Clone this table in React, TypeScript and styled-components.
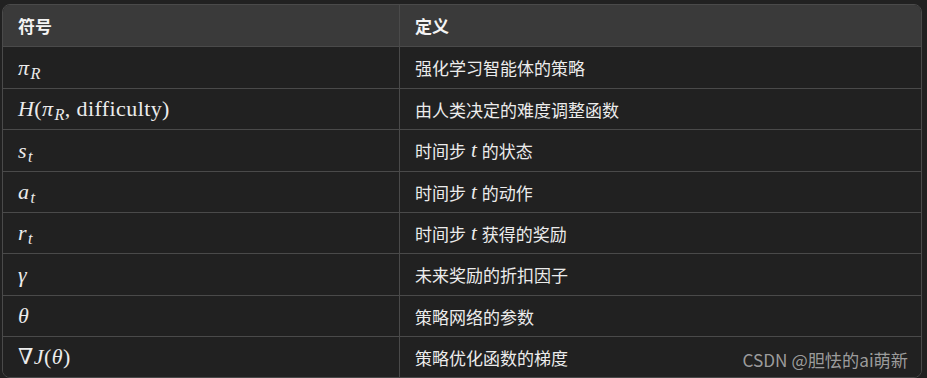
import React from "react";
import styled, { createGlobalStyle } from "styled-components";

const Global = createGlobalStyle`
  html, body { margin: 0; padding: 0; background: #212121; }
  body { font-family: "Noto Sans CJK SC", "Noto Sans", sans-serif; color: #ececec; }
`;

const Page = styled.div`
  position: relative;
  width: 927px;
  height: 378px;
  padding: 4px 5px 0 2px;
  box-sizing: border-box;
`;

const Table = styled.div`
  border: 1px solid #4a4a4a;
  border-radius: 8px;
  overflow: hidden;
  background: #212121;
`;

const Row = styled.div<{ $head?: boolean; $h: number }>`
  display: grid;
  grid-template-columns: 396px 1fr;
  height: ${(p) => p.$h}px;
  background: ${(p) => (p.$head ? "#3a3a3a" : "#212121")};
  & + & { border-top: 1px solid #4a4a4a; }
  box-sizing: border-box;
`;

const Cell = styled.div<{ $head?: boolean }>`
  display: flex;
  align-items: center;
  padding-left: 15px;
  font-size: 17px;
  font-weight: ${(p) => (p.$head ? 700 : 400)};
  color: ${(p) => (p.$head ? "#f4f4f4" : "#ececec")};
  white-space: nowrap;
  & + & { border-left: 1px solid #4a4a4a; padding-left: 15px; }
`;

const Math = styled.span`
  font-family: "Liberation Serif", "DejaVu Serif", serif;
  font-size: 22px;
  letter-spacing: 0.4px;
  color: #ececec;
  line-height: 1;
  white-space: nowrap;
`;

const I = styled.i`
  font-style: italic;
`;

const Sub = styled.sub`
  font-size: 0.74em;
  font-style: italic;
  vertical-align: -0.25em;
  line-height: 0;
  margin-left: 1px;
`;

const Up = styled.span`
  font-style: normal;
`;

const InlineT = styled.i`
  font-family: "Liberation Serif", "DejaVu Serif", serif;
  font-size: 21px;
  font-style: italic;
  margin: 0 5px 0 5px;
`;

const Watermark = styled.div`
  position: absolute;
  right: 19px;
  bottom: 6px;
  font-family: "Noto Sans CJK SC", "Noto Sans", sans-serif;
  font-size: 17.2px;
  color: rgba(190, 190, 190, 0.8);
  white-space: nowrap;
`;

type R = { sym: React.ReactNode; def: React.ReactNode; h: number };

const rows: R[] = [
  {
    sym: (
      <Math>
        <I>π</I>
        <Sub>R</Sub>
      </Math>
    ),
    def: "强化学习智能体的策略",
    h: 42,
  },
  {
    sym: (
      <Math>
        <I>H</I>
        <Up>(</Up>
        <I>π</I>
        <Sub>R</Sub>
        <Up>, difficulty)</Up>
      </Math>
    ),
    def: "由人类决定的难度调整函数",
    h: 41,
  },
  {
    sym: (
      <Math>
        <I>s</I>
        <Sub>t</Sub>
      </Math>
    ),
    def: (
      <>
        时间步<InlineT>t</InlineT>的状态
      </>
    ),
    h: 42,
  },
  {
    sym: (
      <Math>
        <I>a</I>
        <Sub>t</Sub>
      </Math>
    ),
    def: (
      <>
        时间步<InlineT>t</InlineT>的动作
      </>
    ),
    h: 41,
  },
  {
    sym: (
      <Math>
        <I>r</I>
        <Sub>t</Sub>
      </Math>
    ),
    def: (
      <>
        时间步<InlineT>t</InlineT>获得的奖励
      </>
    ),
    h: 41,
  },
  {
    sym: (
      <Math>
        <I>γ</I>
      </Math>
    ),
    def: "未来奖励的折扣因子",
    h: 42,
  },
  {
    sym: (
      <Math>
        <I>θ</I>
      </Math>
    ),
    def: "策略网络的参数",
    h: 41,
  },
  {
    sym: (
      <Math>
        <Up>∇</Up>
        <I>J</I>
        <Up>(</Up>
        <I>θ</I>
        <Up>)</Up>
      </Math>
    ),
    def: "策略优化函数的梯度",
    h: 41,
  },
];

export default function App() {
  return (
    <>
      <Global />
      <Page>
        <Table>
          <Row $head $h={41}>
            <Cell $head>符号</Cell>
            <Cell $head>定义</Cell>
          </Row>
          {rows.map((r, i) => (
            <Row key={i} $h={r.h}>
              <Cell>{r.sym}</Cell>
              <Cell>{r.def}</Cell>
            </Row>
          ))}
        </Table>
        <Watermark>CSDN @胆怯的ai萌新</Watermark>
      </Page>
    </>
  );
}
